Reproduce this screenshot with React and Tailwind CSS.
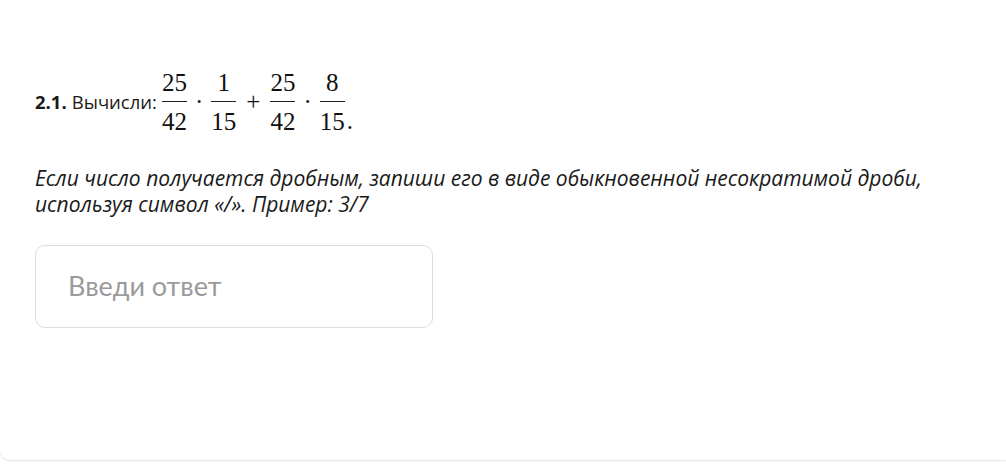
export default function App() {
    const Frac = ({ num, den }) => (
        <span className="inline-flex flex-col items-center mx-[2px]">
            <span className="leading-none pb-[6px]">{num}</span>
            <span className="w-full h-[1px] bg-[#222]"></span>
            <span className="leading-none pt-[7px]">{den}</span>
        </span>
    );

    return (
        <div className="w-[1006px] h-[473px] bg-white overflow-hidden">
            <div className="h-[460px] bg-white rounded-bl-[10px] shadow-[0_1px_2px_rgba(0,0,0,0.12)] pt-[70px] pl-[35px]">
                <div className="flex items-center text-[#1a1a1a]">
                    <span className="font-['Open_Sans',sans-serif] text-[18.5px] font-bold">2.1.</span>
                    <span className="font-['Open_Sans',sans-serif] text-[18.5px] ml-[5px]">Вычисли:</span>
                    <span className="flex items-center ml-[3px] font-['Liberation_Serif','DejaVu_Serif',serif] text-[25px] text-[#111]">
                        <Frac num="25" den="42" />
                        <span className="mx-[6px]">·</span>
                        <Frac num="1" den="15" />
                        <span className="mx-[8px]">+</span>
                        <Frac num="25" den="42" />
                        <span className="mx-[6px]">·</span>
                        <Frac num="8" den="15" />
                        <span className="self-end leading-none mb-[1px]">.</span>
                    </span>
                </div>
                <p className="mt-[31px] w-[920px] font-['Open_Sans',sans-serif] italic text-[21px] leading-[26px] text-[#1a1a1a]">
                    Если число получается дробным, запиши его в виде обыкновенной несократимой дроби, используя символ «/». Пример: 3/7
                </p>
                <div className="mt-[28px] w-[398px] h-[83px] border border-[#dcdcdc] rounded-[10px] flex items-center pl-[32px]">
                    <span className="font-['Lato',sans-serif] text-[27px] text-[#9a9a9a]">Введи ответ</span>
                </div>
            </div>
        </div>
    );
}
